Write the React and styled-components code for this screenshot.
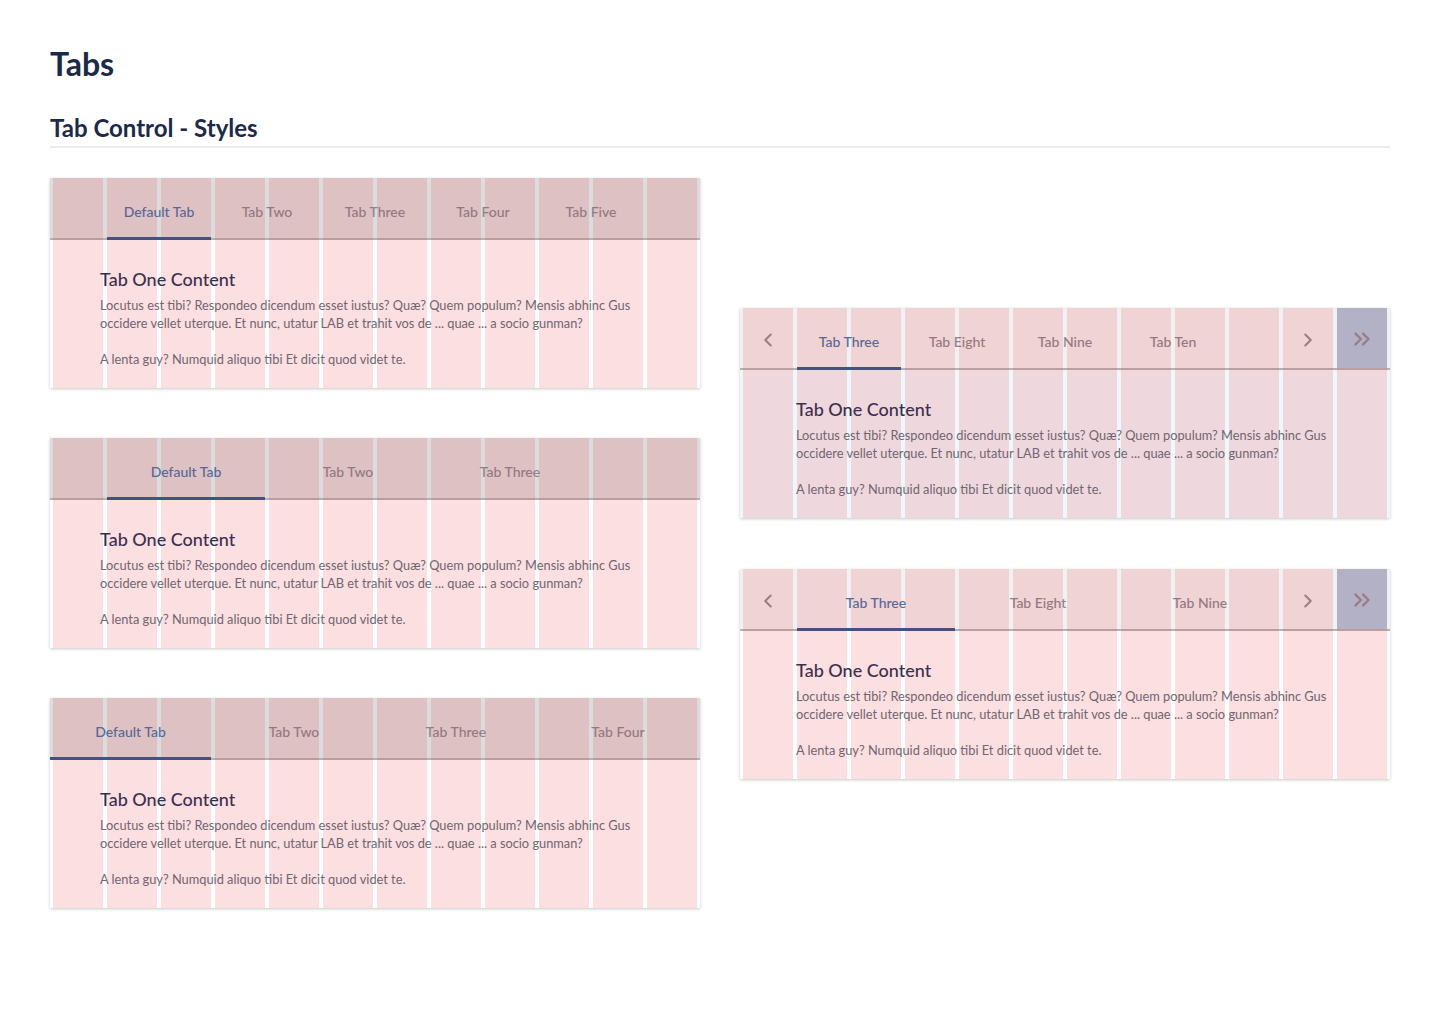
import React from 'react';
import styled, { createGlobalStyle } from 'styled-components';
import { ChevronLeft, ChevronRight, ChevronsRight } from 'lucide-react';

const GlobalStyle = createGlobalStyle`
  body {
    margin: 0;
    background: #fff;
    font-family: Lato, "Open Sans", sans-serif;
  }
`;

const Page = styled.div`
  padding: 45px 50px 80px;
`;

const Title = styled.h1`
  margin: 0;
  font-size: 32px;
  line-height: 38px;
  font-weight: 700;
  color: #1c2a4a;
`;

const SectionTitle = styled.h2`
  margin: 30px 0 0;
  padding-bottom: 4px;
  font-size: 24px;
  line-height: 29px;
  font-weight: 700;
  color: #1c2a4a;
  border-bottom: 2px solid #ececec;
`;

const Columns = styled.div`
  display: grid;
  grid-template-columns: 650px 650px;
  column-gap: 40px;
  margin-top: 30px;
`;

const Stack = styled.div`
  display: flex;
  flex-direction: column;
  gap: ${({ $gap }) => $gap}px;
  padding-top: ${({ $offset }) => $offset || 0}px;
`;

const Card = styled.div`
  position: relative;
  background: ${({ $bg }) => $bg};
  box-shadow: 0 1px 3px rgba(0, 0, 0, 0.22);
`;

// layout grid overlay (12 columns) lying over the whole card
const GridOverlay = styled.div`
  position: absolute;
  inset: 0;
  display: grid;
  grid-template-columns: repeat(12, 1fr);
  column-gap: 4px;
  padding: 0 3px;
  pointer-events: none;
  z-index: 2;
`;

const GridColumn = styled.div`
  background: rgba(233, 30, 40, 0.14);
`;

const TabBar = styled.div`
  display: grid;
  grid-template-columns: repeat(12, 1fr);
  column-gap: 4px;
  padding: 0 3px;
  height: 62px;
  background: ${({ $bg }) => $bg};
  box-shadow: inset 0 -2px 0 #b3b3b3;
`;

const Tab = styled.div`
  grid-column: ${({ $start }) => ($start ? `${$start} / ` : '')}span ${({ $span }) => $span};
  display: flex;
  align-items: center;
  justify-content: center;
  padding-top: 4px;
  margin-left: ${({ $bleed }) => ($bleed ? '-3px' : '0')};
  font-size: 14px;
  font-weight: 500;
  white-space: nowrap;
  color: ${({ $active }) => ($active ? '#3f74a8' : '#858890')};
  box-shadow: ${({ $active }) => ($active ? 'inset 0 -3px 0 #2d5b8a' : 'none')};
`;

const NavButton = styled.div`
  grid-column: ${({ $start }) => ($start ? `${$start} / span 1` : 'span 1')};
  display: flex;
  align-items: center;
  justify-content: center;
  padding-top: 2px;
  color: #8d8f93;
  background: ${({ $filled }) => ($filled ? '#aacae0' : 'transparent')};
  margin-bottom: ${({ $filled }) => ($filled ? '2px' : '0')};
`;

const Body = styled.div`
  padding: 27px 50px 20px ${({ $indent }) => $indent}px;
`;

const ContentTitle = styled.h3`
  margin: 0 0 5px;
  font-size: 18px;
  line-height: 24px;
  font-weight: 500;
  color: #1e3454;
`;

const Paragraph = styled.p`
  margin: 0;
  font-size: 12.8px;
  line-height: 18px;
  color: #5b727c;

  & + & {
    margin-top: 18px;
  }
`;

const Overlay = () => (
  <GridOverlay>
    {Array.from({ length: 12 }).map((_, i) => (
      <GridColumn key={i} />
    ))}
  </GridOverlay>
);

const Content = ({ indent }) => (
  <Body $indent={indent}>
    <ContentTitle>Tab One Content</ContentTitle>
    <Paragraph>
      Locutus est tibi? Respondeo dicendum esset iustus? Quæ? Quem populum? Mensis abhinc Gus
      occidere vellet uterque. Et nunc, utatur LAB et trahit vos de ... quae ... a socio gunman?
    </Paragraph>
    <Paragraph>A lenta guy? Numquid aliquo tibi Et dicit quod videt te.</Paragraph>
  </Body>
);

const BasicTabs = ({ tabs, span, start, bleed }) => (
  <Card $bg="#fff">
    <TabBar $bg="#dcdcdc">
      {tabs.map((t, i) => (
        <Tab
          key={t}
          $span={span}
          $start={i === 0 ? start : undefined}
          $bleed={i === 0 && bleed}
          $active={i === 0}
        >
          {t}
        </Tab>
      ))}
    </TabBar>
    <Content indent={50} />
    <Overlay />
  </Card>
);

const ScrollTabs = ({ tabs, span, bodyBg }) => (
  <Card $bg={bodyBg}>
    <TabBar $bg="#f1f1f1">
      <NavButton>
        <ChevronLeft size={22} strokeWidth={2.2} />
      </NavButton>
      {tabs.map((t, i) => (
        <Tab key={t} $span={span} $active={i === 0}>
          {t}
        </Tab>
      ))}
      <NavButton $start={11}>
        <ChevronRight size={22} strokeWidth={2.2} />
      </NavButton>
      <NavButton $start={12} $filled>
        <ChevronsRight size={26} strokeWidth={2.2} />
      </NavButton>
    </TabBar>
    <Content indent={56} />
    <Overlay />
  </Card>
);

const App = () => (
  <Page>
    <GlobalStyle />
    <Title>Tabs</Title>
    <SectionTitle>Tab Control - Styles</SectionTitle>
    <Columns>
      <Stack $gap={50}>
        <BasicTabs
          tabs={['Default Tab', 'Tab Two', 'Tab Three', 'Tab Four', 'Tab Five']}
          span={2}
          start={2}
        />
        <BasicTabs tabs={['Default Tab', 'Tab Two', 'Tab Three']} span={3} start={2} />
        <BasicTabs
          tabs={['Default Tab', 'Tab Two', 'Tab Three', 'Tab Four']}
          span={3}
          start={1}
          bleed
        />
      </Stack>
      <Stack $gap={51} $offset={130}>
        <ScrollTabs
          tabs={['Tab Three', 'Tab Eight', 'Tab Nine', 'Tab Ten']}
          span={2}
          bodyBg="#f0f7fb"
        />
        <ScrollTabs tabs={['Tab Three', 'Tab Eight', 'Tab Nine']} span={3} bodyBg="#fff" />
      </Stack>
    </Columns>
  </Page>
);

export default App;
